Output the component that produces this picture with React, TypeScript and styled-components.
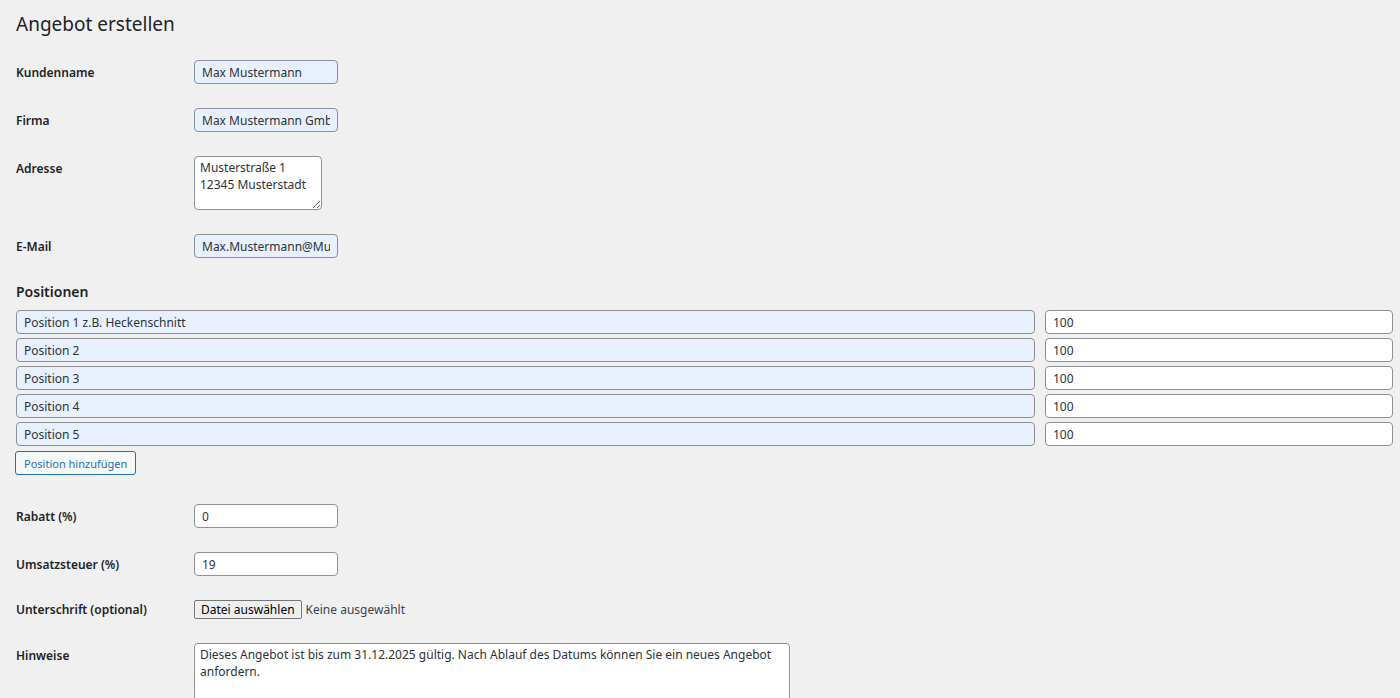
import styled, { createGlobalStyle } from 'styled-components';

const Global = createGlobalStyle`
  body {
    margin: 0;
    background: #f0f0f1;
    font-family: 'Noto Sans', 'Open Sans', sans-serif;
    font-size: 13px;
    color: #1d2327;
  }
`;

const positions = [
  'Position 1 z.B. Heckenschnitt',
  'Position 2',
  'Position 3',
  'Position 4',
  'Position 5',
];

const App = () => {
  return (
    <Page>
      <Global />
      <Title>Angebot erstellen</Title>
      <Rows>
        <Row>
          <Label>Kundenname</Label>
          <Input $filled defaultValue="Max Mustermann" />
        </Row>
        <Row>
          <Label>Firma</Label>
          <Input $filled defaultValue="Max Mustermann GmbH" />
        </Row>
        <Row>
          <Label $top>Adresse</Label>
          <Area $w={128} $h={54} defaultValue={'Musterstraße 1\n12345 Musterstadt'} />
        </Row>
        <Row>
          <Label>E-Mail</Label>
          <Input $filled defaultValue="Max.Mustermann@Mustermann.de" />
        </Row>
      </Rows>
      <Section>Positionen</Section>
      <PosList>
        {positions.map((p) => (
          <PosRow key={p}>
            <Input $filled $wide defaultValue={p} />
            <Input $wide defaultValue="100" />
          </PosRow>
        ))}
      </PosList>
      <AddButton>Position hinzufügen</AddButton>
      <Rows $mt={29}>
        <Row>
          <Label>Rabatt (%)</Label>
          <Input defaultValue="0" />
        </Row>
        <Row>
          <Label>Umsatzsteuer (%)</Label>
          <Input defaultValue="19" />
        </Row>
        <Row>
          <Label>Unterschrift (optional)</Label>
          <FileWrap>
            <FileButton>Datei auswählen</FileButton>
            <FileText>Keine ausgewählt</FileText>
          </FileWrap>
        </Row>
        <Row>
          <Label $top>Hinweise</Label>
          <Area
            $w={596}
            $h={80}
            defaultValue="Dieses Angebot ist bis zum 31.12.2025 gültig. Nach Ablauf des Datums können Sie ein neues Angebot anfordern."
          />
        </Row>
      </Rows>
    </Page>
  );
};

export default App;

const Page = styled.div`
  padding: 10px 8px 0 16px;
  height: 698px;
  overflow: hidden;
  box-sizing: border-box;
`;

const Title = styled.h1`
  margin: 0 0 22px;
  font-size: 19px;
  font-weight: 400;
  line-height: 28px;
  color: #1d2327;
`;

const Rows = styled.div<{ $mt?: number }>`
  display: flex;
  flex-direction: column;
  gap: 24px;
  margin-top: ${({ $mt }) => $mt ?? 0}px;
`;

const Row = styled.div`
  display: flex;
  align-items: center;
`;

const Label = styled.div<{ $top?: boolean }>`
  width: 178px;
  flex-shrink: 0;
  font-weight: 600;
  font-size: 12px;
  align-self: ${({ $top }) => ($top ? 'flex-start' : 'center')};
  padding-top: ${({ $top }) => ($top ? '4px' : '0')};
`;

const Input = styled.input<{ $filled?: boolean; $wide?: boolean }>`
  box-sizing: border-box;
  width: ${({ $wide }) => ($wide ? '100%' : '144px')};
  height: 24px;
  padding: 0 7px;
  border: 1px solid #8c8f94;
  border-radius: 4px;
  background: ${({ $filled }) => ($filled ? '#e8f0fe' : '#fff')};
  font-family: inherit;
  font-size: 12px;
  color: #2c3338;
`;

const Area = styled.textarea<{ $w: number; $h: number }>`
  box-sizing: border-box;
  width: ${({ $w }) => $w}px;
  height: ${({ $h }) => $h}px;
  padding: 2px 5px;
  border: 1px solid #8c8f94;
  border-radius: 4px;
  background: #fff;
  font-family: inherit;
  font-size: 12px;
  line-height: 17px;
  color: #2c3338;
`;

const Section = styled.h2`
  margin: 24px 0 8px;
  font-size: 14px;
  font-weight: 600;
  line-height: 20px;
`;

const PosList = styled.div`
  display: flex;
  flex-direction: column;
  gap: 4px;
`;

const PosRow = styled.div`
  display: grid;
  grid-template-columns: 1019px 348px;
  gap: 10px;
`;

const AddButton = styled.button`
  margin-top: 5px;
  height: 24px;
  padding: 0 8px;
  border: 1px solid #2271b1;
  border-radius: 3px;
  background: #f6f7f7;
  color: #2271b1;
  font-family: inherit;
  font-size: 11px;
  margin-left: -1px;
`;

const FileWrap = styled.div`
  display: flex;
  align-items: center;
  gap: 4px;
`;

const FileButton = styled.button`
  height: 19px;
  padding: 0 6px;
  border: 1px solid #767676;
  border-radius: 2px;
  background: #efefef;
  font-family: 'Noto Sans', sans-serif;
  font-size: 12px;
  color: #000;
`;

const FileText = styled.span`
  font-size: 12px;
  color: #3c434a;
`;
